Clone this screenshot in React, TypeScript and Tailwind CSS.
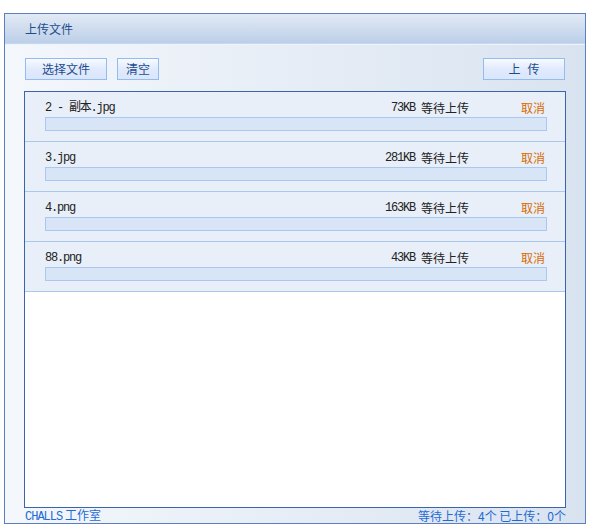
const files = [
  { name: '2 - 副本.jpg', size: '73KB' },
  { name: '3.jpg', size: '281KB' },
  { name: '4.png', size: '163KB' },
  { name: '88.png', size: '43KB' },
];

const cjk = { fontFamily: '"Noto Sans CJK SC", "Liberation Sans", sans-serif' };
const mono = { fontFamily: '"Liberation Mono", "Noto Sans CJK SC", monospace' };

function Btn({ children, w }: { children: React.ReactNode; w: string }) {
  return (
    <button
      className={`${w} h-[22px] border border-[#93bcef] bg-linear-to-b from-[#f7faff] via-[#e1eafd] to-[#dbe6fc] text-[12px] leading-none text-[#1d4c8c] flex items-center justify-center`}
      style={cjk}
    >
      {children}
    </button>
  );
}

export default function App() {
  return (
    <div className="w-[598px] h-[530px] bg-white pt-[13px] pl-[4px]" style={cjk}>
      <div className="w-[582px] h-[511px] border border-[#5b7fc1] flex flex-col bg-linear-to-r from-[#f4f7fc] to-[#d9e3f0]">
        <div className="h-[29px] shrink-0 bg-linear-to-b from-[#e2eaf5] to-[#bccfe8] flex items-center pl-[20px] text-[12px] text-[#1f4e8c]">
          上传文件
        </div>
        <div className="h-[2px] shrink-0 bg-[#c5d8f0] border-b border-[#eef4fb]" />
        <div className="flex-1 flex flex-col px-[19px] pt-[13px]">
          <div className="flex items-center h-[22px]">
            <Btn w="w-[82px] ml-[1px]">选择文件</Btn>
            <div className="w-[10px]" />
            <Btn w="w-[42px]">清空</Btn>
            <div className="flex-1" />
            <Btn w="w-[82px] mr-[1px] gap-[7px]">
              <span>上</span>
              <span>传</span>
            </Btn>
          </div>
          <div className="mt-[11px] h-[417px] border border-[#3c65a9] bg-white flex flex-col">
            {files.map((f) => (
              <div key={f.name} className="h-[50px] shrink-0 bg-[#e8eff8] border-b border-[#abc7ed] pl-[20px] pr-[18px] pt-[9px]">
                <div className="flex items-center h-[14px] pr-[2px] text-[12px] text-[#222]">
                  <span className="flex-1 tracking-[-1.2px]" style={mono}>{f.name}</span>
                  <span className="tracking-[-1.2px]" style={mono}>{f.size}</span>
                  <span className="ml-[6px]">等待上传</span>
                  <span className="ml-[52px] text-[#d86b00]">取消</span>
                </div>
                <div className="mt-[2px] h-[14px] bg-[#d8e5f7] border border-[#a9c7f0]" />
              </div>
            ))}
          </div>
          <div className="flex items-center justify-between h-[15px] text-[12px] text-[#1e6bd3] pl-[1px]">
            <span>
              <span className="tracking-[-1px]" style={mono}>CHALLS</span> 工作室
            </span>
            <span>等待上传：4个 已上传：0个</span>
          </div>
        </div>
      </div>
    </div>
  );
}
